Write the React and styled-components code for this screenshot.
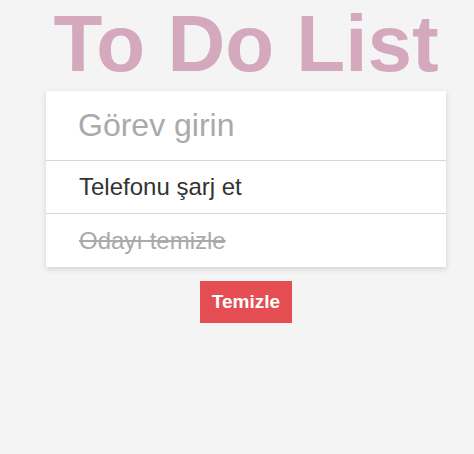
import React from "react";
import styled, { createGlobalStyle } from "styled-components";

const Global = createGlobalStyle`
  html, body { margin: 0; padding: 0; background: #f4f4f4; }
  body { font-family: "Liberation Sans", Arial, sans-serif; }
`;

const Page = styled.div`
  display: flex;
  flex-direction: column;
  align-items: center;
  padding-left: 18px;
  min-height: 454px;
  box-sizing: border-box;
`;

const Title = styled.h1`
  margin: 4px 0 7px;
  font-size: 80px;
  line-height: 80px;
  font-weight: bold;
  color: #d4a9bd;
  text-align: center;
  white-space: nowrap;
`;

const Card = styled.div`
  width: 400px;
  background: #fff;
  box-shadow: 0 2px 6px rgba(0, 0, 0, 0.14);
  display: flex;
  flex-direction: column;
`;

const Input = styled.input`
  box-sizing: border-box;
  height: 70px;
  width: 100%;
  border: none;
  border-bottom: 1px solid #d6d6d6;
  padding: 0 0 0 32px;
  font-family: "Liberation Sans", Arial, sans-serif;
  font-size: 32px;
  color: #333;
  outline: none;
  background: transparent;
  &::placeholder { color: #aaaaaa; }
`;

const Item = styled.div`
  box-sizing: border-box;
  height: 53px;
  display: flex;
  align-items: center;
  padding-left: 33px;
  font-size: 24px;
  color: ${(p) => (p.$done ? "#aaaaaa" : "#333")};
  text-decoration: ${(p) => (p.$done ? "line-through" : "none")};
  border-bottom: ${(p) => (p.$last ? "none" : "1px solid #d6d6d6")};
`;

const Button = styled.button`
  margin-top: 14px;
  width: 92px;
  height: 42px;
  border: none;
  background: #e44d51;
  color: #fff;
  font-family: "Liberation Sans", Arial, sans-serif;
  font-weight: bold;
  font-size: 19px;
  padding: 0;
  cursor: pointer;
`;

export default function App() {
  return (
    <>
      <Global />
      <Page>
        <Title>To Do List</Title>
        <Card>
          <Input placeholder="Görev girin" />
          <Item>Telefonu şarj et</Item>
          <Item $done $last>Odayı temizle</Item>
        </Card>
        <Button>Temizle</Button>
      </Page>
    </>
  );
}
